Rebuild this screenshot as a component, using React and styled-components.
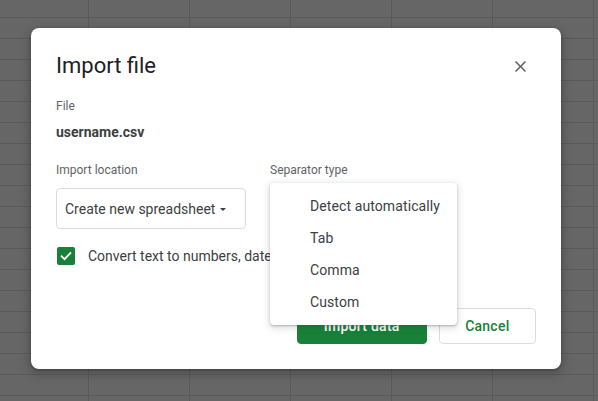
import React from "react";
import styled, { createGlobalStyle } from "styled-components";

const GlobalStyle = createGlobalStyle`
  html, body {
    margin: 0;
    padding: 0;
    width: 100%;
    height: 100%;
  }
  body {
    font-family: Roboto, "Noto Sans", Arial, sans-serif;
  }
  * { box-sizing: border-box; }
`;

const Page = styled.div`
  width: 100vw;
  height: 100vh;
  overflow: hidden;
  padding: 28px 0 0 31px;
  background-color: #666666;
  background-image:
    linear-gradient(to right, #5a5a5a 1px, transparent 1px),
    linear-gradient(to bottom, #5a5a5a 1px, transparent 1px);
  background-size: 101px 100%, 100% 21px;
  background-position: 88px 0, 0 17px;
`;

const Dialog = styled.div`
  position: relative;
  width: 530px;
  height: 341px;
  background: #ffffff;
  border-radius: 8px;
  padding: 24px 25px 25px 25px;
  display: flex;
  flex-direction: column;
  box-shadow: 0 4px 8px 3px rgba(0, 0, 0, 0.15), 0 1px 3px rgba(0, 0, 0, 0.3);
`;

const Header = styled.div`
  display: flex;
  align-items: center;
  justify-content: space-between;
  height: 28px;
`;

const Title = styled.h1`
  margin: 0;
  font-size: 22px;
  line-height: 28px;
  font-weight: 400;
  color: #202124;
`;

const CloseButton = styled.button`
  width: 24px;
  height: 24px;
  margin-right: 4px;
  padding: 0;
  border: none;
  background: transparent;
  display: flex;
  align-items: center;
  justify-content: center;
  color: #5f6368;
  cursor: pointer;
`;

const Label = styled.div`
  font-size: 12px;
  line-height: 16px;
  color: #5f6368;
  margin-top: ${(p) => p.$mt || 0}px;
`;

const FileName = styled.div`
  margin-top: 8px;
  font-size: 14px;
  line-height: 20px;
  font-weight: 700;
  color: #3c4043;
`;

const FieldRow = styled.div`
  margin-top: 20px;
  display: grid;
  grid-template-columns: 190px 1fr;
  column-gap: 24px;
`;

const Field = styled.div`
  position: relative;
  display: flex;
  flex-direction: column;
  gap: 10px;
`;

const Select = styled.div`
  width: 190px;
  height: 41px;
  border: 1px solid #dadce0;
  border-radius: 4px;
  padding: 0 8px;
  display: flex;
  align-items: center;
  gap: 5px;
  font-size: 14px;
  color: #3c4043;
`;

const Caret = styled.span`
  width: 0;
  height: 0;
  border-left: 3.5px solid transparent;
  border-right: 3.5px solid transparent;
  border-top: 3.5px solid #3c4043;
  margin-top: 1px;
`;

const CheckRow = styled.div`
  margin-top: 18px;
  display: flex;
  align-items: center;
  gap: 13px;
  padding-left: 1px;
  font-size: 14px;
  color: #3c4043;
  white-space: nowrap;
`;

const CheckBox = styled.span`
  width: 18px;
  height: 18px;
  border-radius: 2px;
  background: #188038;
  display: flex;
  align-items: center;
  justify-content: center;
  flex: none;
`;

const Footer = styled.div`
  margin-top: auto;
  display: flex;
  justify-content: flex-end;
  gap: 12px;
`;

const Button = styled.button`
  height: 36px;
  padding: 0 ${(p) => (p.$primary ? 26 : 25.5)}px;
  border-radius: 4px;
  font-family: Roboto, "Noto Sans", Arial, sans-serif;
  font-size: 14px;
  font-weight: 500;
  letter-spacing: 0.25px;
  cursor: pointer;
  border: 1px solid ${(p) => (p.$primary ? "#188038" : "#dadce0")};
  background: ${(p) => (p.$primary ? "#188038" : "#ffffff")};
  color: ${(p) => (p.$primary ? "#ffffff" : "#188038")};
`;

const Menu = styled.ul`
  position: absolute;
  top: 21px;
  left: 0;
  width: 187px;
  margin: 0;
  padding: 7px 0;
  list-style: none;
  background: #ffffff;
  border-radius: 4px;
  box-shadow: 0 2px 6px 2px rgba(60, 64, 67, 0.15), 0 1px 2px rgba(60, 64, 67, 0.3);
  z-index: 2;
`;

const MenuItem = styled.li`
  height: 32px;
  padding-left: 40px;
  display: flex;
  align-items: center;
  font-size: 14px;
  letter-spacing: 0.1px;
  color: #3c4043;
  white-space: nowrap;
`;

const separators = ["Detect automatically", "Tab", "Comma", "Custom"];

export default function App() {
  return (
    <>
      <GlobalStyle />
      <Page>
        <Dialog>
          <Header>
            <Title>Import file</Title>
            <CloseButton aria-label="Close">
              <svg width="19" height="19" viewBox="0 0 24 24" fill="currentColor">
                <path d="M19 6.41L17.59 5 12 10.59 6.41 5 5 6.41 10.59 12 5 17.59 6.41 19 12 13.41 17.59 19 19 17.59 13.41 12z" />
              </svg>
            </CloseButton>
          </Header>
          <Label $mt={18}>File</Label>
          <FileName>username.csv</FileName>
          <FieldRow>
            <Field>
              <Label>Import location</Label>
              <Select>
                <span>Create new spreadsheet</span>
                <Caret />
              </Select>
            </Field>
            <Field>
              <Label>Separator type</Label>
              <Menu>
                {separators.map((s) => (
                  <MenuItem key={s}>{s}</MenuItem>
                ))}
              </Menu>
            </Field>
          </FieldRow>
          <CheckRow>
            <CheckBox>
              <svg width="14" height="14" viewBox="0 0 24 24" fill="none" stroke="#ffffff" strokeWidth="3.2" strokeLinecap="square">
                <path d="M4.5 12.5l5 5L19.5 7" />
              </svg>
            </CheckBox>
            <span>Convert text to numbers, dates, and formulas</span>
          </CheckRow>
          <Footer>
            <Button $primary>Import data</Button>
            <Button>Cancel</Button>
          </Footer>
        </Dialog>
      </Page>
    </>
  );
}
